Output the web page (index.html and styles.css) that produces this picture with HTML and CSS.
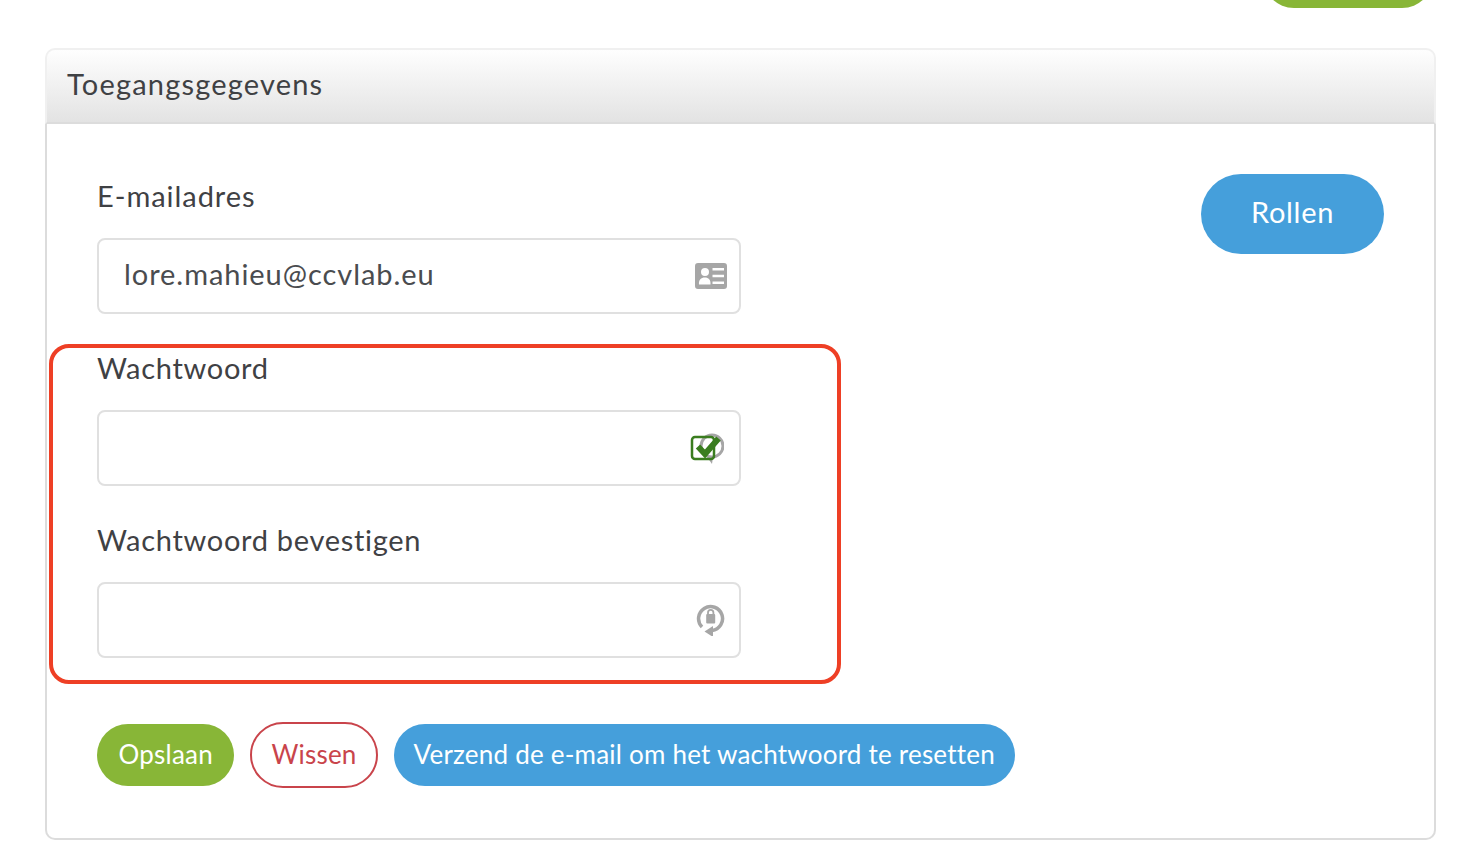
FILE: index.html
```html
<!DOCTYPE html>
<html lang="en">
<head>
  <meta charset="UTF-8" />
  <meta name="viewport" content="width=device-width, initial-scale=1.0"/>
  <title>Toegangsgegevens</title>
  <link rel="stylesheet" href="styles.css">
</head>
<body>
  <!-- Bottom of the button that is scrolled off the top -->
  <div class="top-strip">
    <div class="top-button"></div>
  </div>

  <section class="panel">
    <h2 class="panel-head">Toegangsgegevens</h2>
    <div class="panel-body">
      <div class="panel-row">
        <form class="fields">
          <label class="field-label field-label-email" for="email">E-mailadres</label>
          <div class="field">
            <input type="text" id="email" value="lore.mahieu@ccvlab.eu" />
            <svg class="field-icon" viewBox="0 0 32 26">
              <path fill="#a6a6a6" fill-rule="evenodd" d="M3 0h26a3 3 0 0 1 3 3v20a3 3 0 0 1-3 3H3a3 3 0 0 1-3-3V3a3 3 0 0 1 3-3zM10 5a4 4 0 1 0 0 8 4 4 0 0 0 0-8zM4 21.500h11.500c.5-4.500-2-7-5.700-7s-6.300 2.500-5.800 7zM17.500 5v2.500H29V5zM17.500 11.800v2.500H29v-2.500zM17.500 18.500V21H29v-2.500z"/>
            </svg>
          </div>

          <label class="field-label" for="password">Wachtwoord</label>
          <div class="field">
            <input type="password" id="password" />
            <svg class="field-icon field-icon-check" viewBox="0 0 34 32">
              <circle cx="22" cy="14" r="11" fill="none" stroke="#a6a6a6" stroke-width="3"/>
              <path fill="#a6a6a6" d="M17 25l5 7 1-7z"/>
              <rect x="2" y="5" width="22" height="22" rx="3" fill="none" stroke="#3a7d1f" stroke-width="2.500"/>
              <path fill="none" stroke="#3a7d1f" stroke-width="6" d="M8 14.500l7 7.500L28.500 6.500"/>
            </svg>
          </div>

          <label class="field-label" for="confirm">Wachtwoord bevestigen</label>
          <div class="field">
            <input type="password" id="confirm" />
            <svg class="field-icon" viewBox="0 0 32 32">
              <path fill="none" stroke="#a6a6a6" stroke-width="3.500" d="M7 23A12 12 0 1 1 17 26.500"/>
              <path fill="#a6a6a6" d="M9.500 27.500l8.500-5.500v11z"/>
              <path fill="none" stroke="#a6a6a6" stroke-width="1.800" d="M13 11v-2.500a2.700 2.700 0 0 1 5.400 0V11"/>
              <rect x="11.200" y="10" width="9" height="9.500" rx="1" fill="#a6a6a6"/>
            </svg>
          </div>
        </form>
        <button type="button" class="btn-roles">Rollen</button>
      </div>

      <div class="actions">
        <button type="submit" class="btn btn-save">Opslaan</button>
        <button type="reset" class="btn btn-clear">Wissen</button>
        <button type="button" class="btn btn-reset">Verzend de e-mail om het wachtwoord te resetten</button>
      </div>

      <div class="highlight"></div>
    </div>
  </section>
</body>
</html>
```

FILE: styles.css
```css
* {
  box-sizing: border-box;
}

body {
  margin: 0;
  background-color: white;
  color: #3f4144;
  font-family: 'Lato', 'Noto Sans', sans-serif;
  overflow: hidden;
}

.top-strip {
  display: flex;
  justify-content: flex-end;
  height: 48px;
  padding-right: 45px;
}

.top-button {
  width: 170px;
  height: 62px;
  margin-top: -54px;
  background-color: #88b637;
  border-radius: 31px;
}

.panel {
  position: relative;
  width: 1391px;
  margin-left: 45px;
}

.panel-head {
  height: 76px;
  margin: 0;
  padding: 0 0 0 20px;
  font-size: 29px;
  font-weight: 400;
  letter-spacing: 1.2px;
  line-height: 68px;
  background: linear-gradient(#fefefe, #e3e3e3);
  border: 2px solid #f0f0f0;
  border-bottom: 2px solid #dcdcdc;
  border-radius: 10px 10px 0 0;
}

.panel-body {
  position: relative;
  padding: 49px 50px 50px;
  border: 2px solid #dcdcdc;
  border-top: none;
  border-radius: 0 0 10px 10px;
}

.panel-row {
  display: flex;
  justify-content: space-between;
  align-items: flex-start;
}

.fields {
  width: 644px;
  padding-top: 2px;
}

.field-label {
  display: block;
  height: 44px;
  margin-bottom: 19px;
  font-size: 29px;
  letter-spacing: 0.7px;
  line-height: 42px;
}

.field-label-email {
  letter-spacing: 0.95px;
}

.field {
  position: relative;
  height: 76px;
  margin-bottom: 33px;
}

.field:last-child {
  margin-bottom: 0;
}

.field input {
  width: 100%;
  height: 100%;
  padding: 0 70px 5px 25px;
  font-family: inherit;
  font-size: 29px;
  letter-spacing: 0.95px;
  color: #4a4c4f;
  background-color: white;
  border: 2px solid #e0e0e0;
  border-radius: 8px;
}

.field-icon {
  position: absolute;
  top: 50%;
  right: 14px;
  width: 32px;
  height: 32px;
  transform: translateY(-50%);
}

.field-icon-check {
  right: 17px;
  width: 34px;
}

.btn-roles {
  width: 183px;
  height: 80px;
  margin-top: 1px;
  padding-bottom: 7px;
  font-family: inherit;
  font-size: 29px;
  letter-spacing: 0.7px;
  color: white;
  background-color: #459fdb;
  border: none;
  border-radius: 40px;
}

.actions {
  display: flex;
  align-items: center;
  gap: 16px;
  margin-top: 64px;
}

.btn {
  height: 62px;
  padding: 0 20px 2px;
  font-family: inherit;
  font-size: 26px;
  letter-spacing: 0.22px;
  color: white;
  border: none;
  border-radius: 31px;
}

.btn-save {
  padding: 0 21.500px 2px;
  background-color: #88b637;
}

.btn-clear {
  height: 66px;
  padding: 0 19px 2px;
  color: #c9444b;
  background-color: white;
  border: 2px solid #c9444b;
  border-radius: 33px;
}

.btn-reset {
  background-color: #459fdb;
}

.highlight {
  position: absolute;
  top: 220px;
  left: 2px;
  width: 792px;
  height: 340px;
  border: 4px solid #ee3f25;
  border-radius: 20px;
  pointer-events: none;
}
```
